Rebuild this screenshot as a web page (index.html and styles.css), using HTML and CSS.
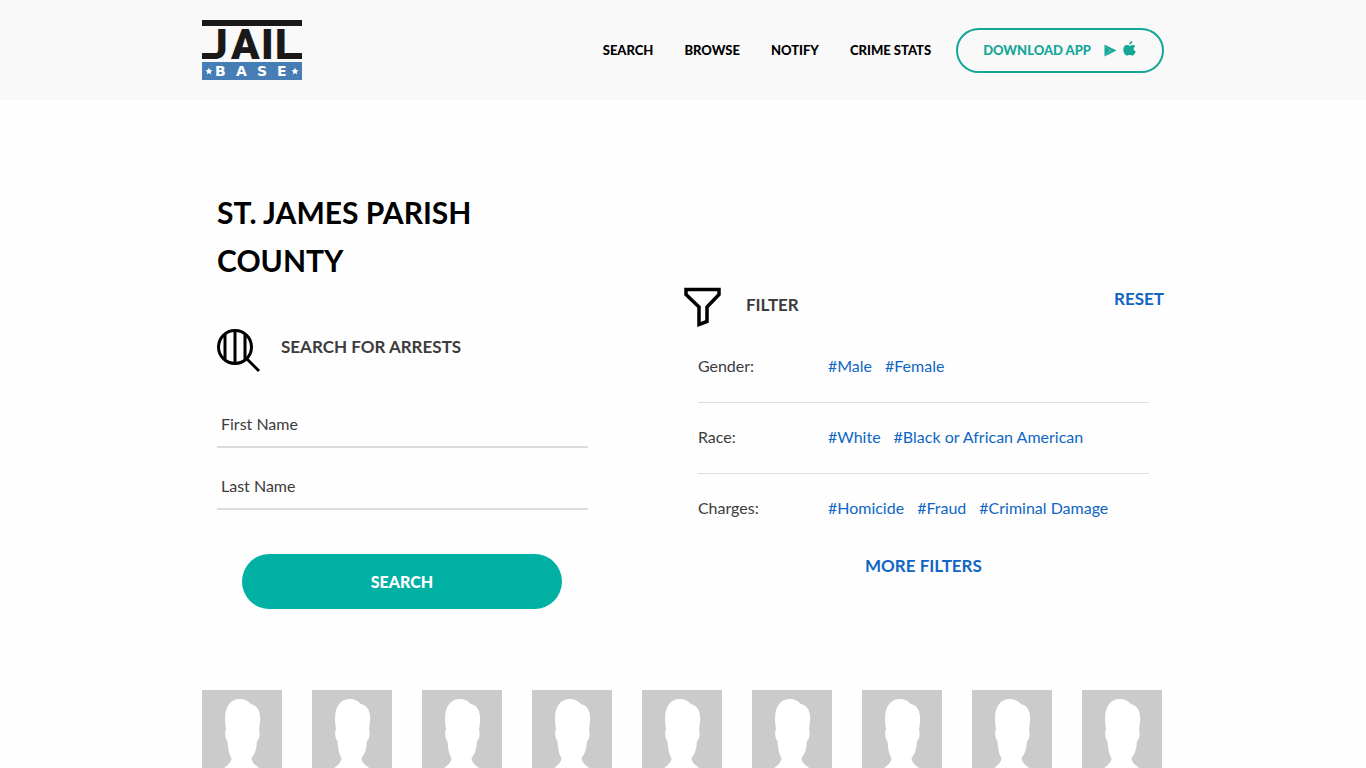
FILE: index.html
```html
<!DOCTYPE html>
<html lang="en">
<head>
  <meta charset="UTF-8" />
  <meta name="viewport" content="width=device-width, initial-scale=1.0" />
  <title>St. James Parish County - JailBase</title>
  <link rel="stylesheet" href="styles.css">
</head>
<body>
  <!-- shared shapes -->
  <svg class="sprite" aria-hidden="true">
    <symbol id="person" viewBox="0 0 80 80">
      <path d="M20 80C24 76 29 74 29.500 68C27 64 26 59 25.500 51C23 49 22.500 42 24 39C21 22 25 10 37 9C43 9 46 11 49 14C57 16 60 24 57 39C58 42 58 49 55 51C54.500 59 53 64 49.500 68C50 74 55 76 60 80Z" fill="#fff"/>
    </symbol>
  </svg>

  <header class="header">
    <div class="container header-inner">
      <a class="logo" href="#" aria-label="JailBase">
        <svg width="100" height="60" viewBox="0 0 100 60">
          <rect width="100" height="6" fill="#1a1818"/>
          <rect y="42" width="100" height="18" fill="#477db5"/>
          <text>
            <tspan class="logo-jail" y="39" x="2 29 59 73">JAIL</tspan><tspan class="logo-base" y="56" x="13 34 55 75">BASE</tspan>
          </text>
          <!-- flatten the hook of the J and run both feet to the edges -->
          <rect y="20" width="13" height="13" fill="#f9f9f9"/>
          <path d="M0 33H15V39H0ZM84 33H100V39H84Z" fill="#1a1818"/>
          <path id="star" d="M7 47.500L8 50L10.500 50.200L8.600 51.900L9.200 54.500L7 53.100L4.800 54.500L5.400 51.900L3.500 50.200L6 50Z" fill="#fff"/>
          <use href="#star" x="86"/>
        </svg>
      </a>
      <nav class="nav">
        <a href="#">Search</a>
        <a href="#">Browse</a>
        <a href="#">Notify</a>
        <a href="#">Crime Stats</a>
        <a class="download" href="#">Download App
          <span class="stores">
            <svg width="13" height="13" viewBox="0 0 13 13"><path d="M0.500 0.500L12.500 6.500L0.500 12.500Z" fill="#14a697"/><path d="M0.500 1L8.500 9M0.500 12L8.500 4" stroke="#7fd0c7" stroke-width="0.600"/></svg>
            <svg class="apple" width="13" height="15" viewBox="0 0 13 15"><path d="M9.300 0C9.400 2 8 3.500 6.200 3.500C6.100 1.800 7.500 0.300 9.300 0ZM12.300 5.200C10 6.500 10.300 9.400 12.800 10.400C12 12.500 10.700 14.500 9.200 14.500C8.200 14.500 7.800 13.900 6.700 13.900C5.500 13.900 5 14.500 4.100 14.500C2.300 14.500 0.300 11.300 0.300 8.400C0.300 5.500 2.100 4 4 4C5.100 4 6 4.700 6.700 4.700C7.400 4.700 8.400 3.900 9.700 3.900C10.600 3.900 11.600 4.300 12.300 5.200Z" fill="#14a697"/></svg>
          </span>
        </a>
      </nav>
    </div>
  </header>

  <main class="container">
    <div class="panels">
      <section class="search-panel">
        <h1>St. James Parish County</h1>
        <div class="section-title">
          <svg width="44" height="44" viewBox="0 0 44 44" fill="none" stroke="#000" stroke-width="3">
            <circle cx="18" cy="18" r="16.500"/>
            <path d="M8 5V31M18 2V34M28 5V31"/>
            <path d="M30 30L42 42"/>
          </svg>
          <h2>Search for arrests</h2>
        </div>
        <form class="search-form">
          <input type="text" name="first" placeholder="First Name" aria-label="First Name">
          <input type="text" name="last" placeholder="Last Name" aria-label="Last Name">
          <button type="button">Search</button>
        </form>
      </section>

      <section class="filter-panel">
        <div class="filter-head">
          <div class="section-title">
            <svg width="38" height="40" viewBox="0 0 38 40">
              <path d="M3 2.500H36V7.500L24 20V34.500L16 37.500V20L3 7.500Z" fill="none" stroke="#000" stroke-width="3.500"/>
            </svg>
            <h2>Filter</h2>
          </div>
          <a class="reset" href="#">Reset</a>
        </div>
        <dl class="filters">
          <div class="filter-row">
            <dt>Gender:</dt>
            <dd><a href="#">#Male</a><a href="#">#Female</a></dd>
          </div>
          <div class="filter-row">
            <dt>Race:</dt>
            <dd><a href="#">#White</a><a href="#">#Black or African American</a></dd>
          </div>
          <div class="filter-row">
            <dt>Charges:</dt>
            <dd><a href="#">#Homicide</a><a href="#">#Fraud</a><a href="#">#Criminal Damage</a></dd>
          </div>
        </dl>
        <a class="more" href="#">More filters</a>
      </section>
    </div>

    <div class="people">
      <a href="#" aria-label="Arrest record"><svg><use href="#person"/></svg></a>
      <a href="#" aria-label="Arrest record"><svg><use href="#person"/></svg></a>
      <a href="#" aria-label="Arrest record"><svg><use href="#person"/></svg></a>
      <a href="#" aria-label="Arrest record"><svg><use href="#person"/></svg></a>
      <a href="#" aria-label="Arrest record"><svg><use href="#person"/></svg></a>
      <a href="#" aria-label="Arrest record"><svg><use href="#person"/></svg></a>
      <a href="#" aria-label="Arrest record"><svg><use href="#person"/></svg></a>
      <a href="#" aria-label="Arrest record"><svg><use href="#person"/></svg></a>
      <a href="#" aria-label="Arrest record"><svg><use href="#person"/></svg></a>
    </div>
  </main>
</body>
</html>
```
FILE: styles.css
```css
:root {
  --teal: #00b0a3;
  --teal-dark: #14a697;
  --blue: #0f66c4;
  --text: #3c3c3c;
}

* {
  box-sizing: border-box;
}

body {
  margin: 0;
  background: #fefefe;
  color: var(--text);
  font-family: Lato, "Open Sans", sans-serif;
  font-size: 16px;
  line-height: 24px;
  overflow-x: hidden;
}

a {
  color: var(--blue);
  text-decoration: none;
}

.sprite {
  display: none;
}

.container {
  max-width: 962px;
  margin: 0 auto;
}

/* header */
.header {
  background: #f9f9f9;
  padding: 20px 0;
}

.header-inner {
  display: flex;
  align-items: center;
  justify-content: space-between;
}

.logo svg {
  display: block;
}

.logo-jail {
  font: 900 42px Roboto, sans-serif;
  fill: #1a1818;
}

.logo-base {
  font: 700 14px "DejaVu Sans", sans-serif;
  fill: #fff;
}

.nav {
  display: flex;
  align-items: center;
  gap: 31px;
  font-size: 13px;
  font-weight: 900;
  text-transform: uppercase;
}

.nav a {
  color: #000;
}

.nav .download {
  display: flex;
  align-items: center;
  gap: 13px;
  height: 45px;
  margin-left: -6px;
  padding: 0 26px 0 25px;
  border: 2px solid var(--teal-dark);
  border-radius: 23px;
  color: var(--teal-dark);
}

.stores {
  display: flex;
  align-items: center;
  gap: 6px;
}

.apple {
  margin-bottom: 4px;
}

/* search and filter */
.panels {
  display: grid;
  grid-template-columns: 5fr 6fr;
  gap: 80px;
  padding-top: 88px;
}

.search-panel {
  padding: 0 15px;
}

h1 {
  max-width: 300px;
  margin: 0 0 45px;
  color: #000;
  font-size: 30px;
  line-height: 48px;
  text-transform: uppercase;
}

h2 {
  margin: 0;
  font-size: 17px;
  line-height: 36px;
  text-transform: uppercase;
}

.section-title {
  display: flex;
  align-items: flex-start;
  gap: 20px;
}

.search-form {
  display: flex;
  flex-direction: column;
  padding-top: 29px;
}

.search-form input {
  height: 46px;
  margin-bottom: 16px;
  padding: 0 4px 2px;
  border: 0;
  border-bottom: 2px solid #dcdcdc;
  background: #fefefe;
  color: var(--text);
  font: inherit;
}

.search-form input::placeholder {
  color: var(--text);
  opacity: 1;
}

.search-form button {
  height: 55px;
  margin: 28px 26px 0 25px;
  border: 0;
  border-radius: 28px;
  background: var(--teal);
  color: #fff;
  font: inherit;
  font-weight: 900;
  text-transform: uppercase;
}

.filter-panel {
  display: flex;
  flex-direction: column;
  padding-top: 99px;
}

.filter-head {
  display: flex;
  justify-content: space-between;
}

.filter-head .section-title {
  gap: 25px;
}

.reset,
.more {
  font-size: 17px;
  font-weight: 700;
  text-transform: uppercase;
}

.filters {
  margin: 5px 15px 0;
}

.filter-row {
  display: flex;
  padding: 22px 0 24px;
  border-bottom: 1px solid #dedede;
}

.filter-row:last-child {
  border-bottom: 0;
}

.filter-row dt {
  width: 130px;
}

.filter-row dd {
  display: flex;
  gap: 13px;
  margin: 0;
}

.more {
  align-self: center;
  margin-top: 10px;
}

/* mugshots */
.people {
  display: grid;
  grid-template-columns: repeat(9, 80px);
  gap: 30px;
  padding-top: 81px;
}

.people a {
  height: 80px;
  background: #cbcbcb;
}

.people svg {
  display: block;
  width: 80px;
  height: 80px;
}
```
